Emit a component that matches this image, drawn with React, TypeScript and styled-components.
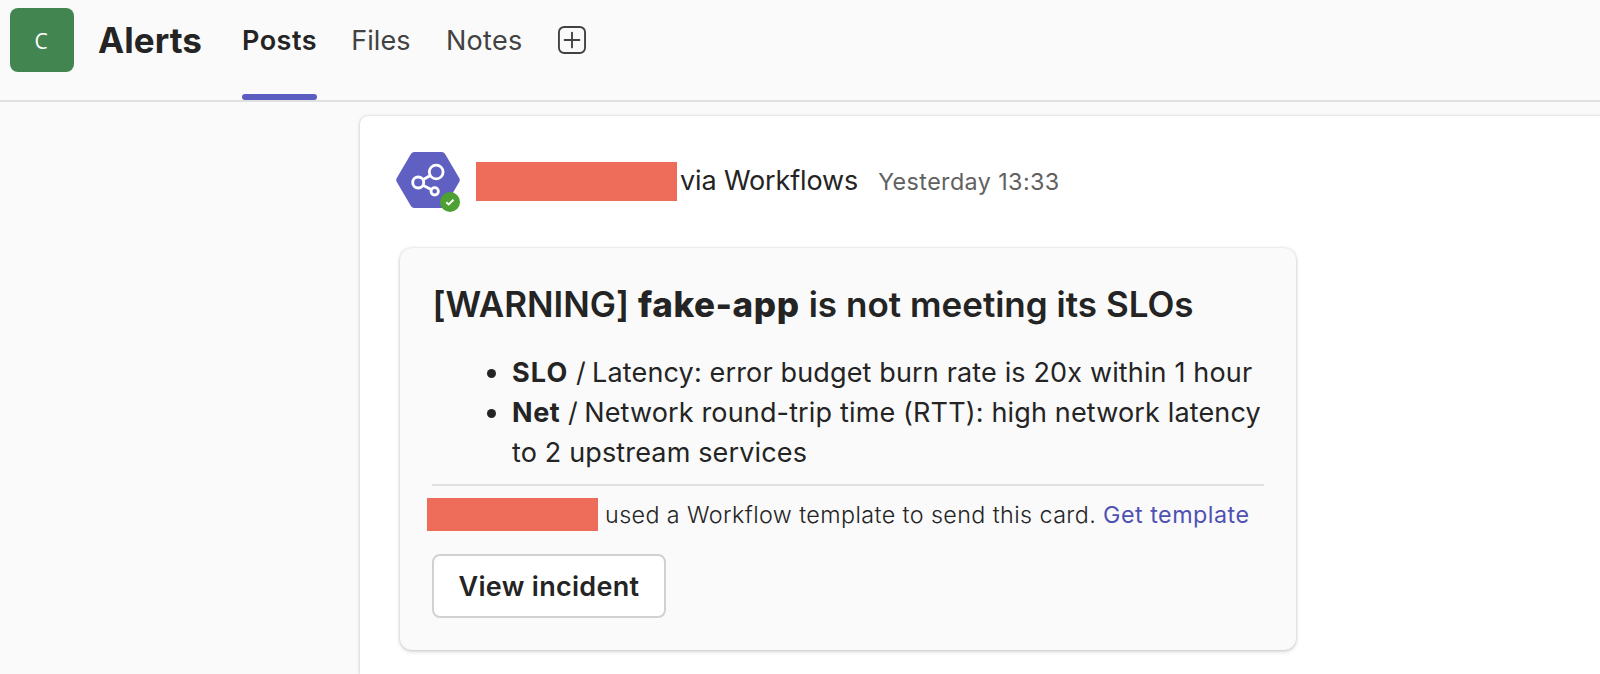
import React from "react";
import styled, { createGlobalStyle } from "styled-components";

const GlobalStyle = createGlobalStyle`
  *, *::before, *::after { box-sizing: border-box; }
  body {
    margin: 0;
    background: #fafafa;
    color: #242424;
    font-family: Inter, "Liberation Sans", sans-serif;
  }
`;

const Page = styled.div`
  display: flex;
  flex-direction: column;
  height: 674px;
  overflow: hidden;
`;

const Header = styled.header`
  display: flex;
  flex: none;
  height: 102px;
  padding-left: 10px;
  border-bottom: 2px solid #e0e0e0;
`;

const TeamAvatar = styled.div`
  display: flex;
  align-items: center;
  justify-content: center;
  width: 64px;
  height: 64px;
  margin: 8px 24px 0 0;
  padding: 2px 2px 0 0;
  border-radius: 8px;
  background: #428550;
  color: #fff;
  font: 400 21px/28px "Open Sans", sans-serif;
`;

const ChannelName = styled.h1`
  width: 144px;
  margin: 0;
  font-size: 35px;
  font-weight: 700;
  line-height: 80px;
  letter-spacing: 0.08px;
`;

const Tabs = styled.nav`
  display: flex;
`;

const Tab = styled.a<{ $active?: boolean; $gap: number; $spacing: number }>`
  position: relative;
  height: 100px;
  margin-right: ${(p) => p.$gap}px;
  color: ${(p) => (p.$active ? "#242424" : "#424242")};
  font-size: 27px;
  font-weight: ${(p) => (p.$active ? 600 : 400)};
  line-height: 82px;
  letter-spacing: ${(p) => p.$spacing}px;

  &::after {
    content: "";
    display: ${(p) => (p.$active ? "block" : "none")};
    position: absolute;
    left: 0;
    bottom: 0;
    width: 75px;
    height: 6px;
    border-radius: 3px;
    background: #5b5dc0;
  }
`;

const AddTab = styled.button`
  display: flex;
  align-items: center;
  height: 80px;
  padding: 0;
  border: 0;
  background: none;
  color: #424242;
`;

const Main = styled.main`
  display: flex;
  flex: 1;
  padding: 14px 0 0 360px;
`;

const Post = styled.article`
  flex: 1;
  padding: 32px 0 0 36px;
  border-top-left-radius: 8px;
  background: #fff;
  box-shadow: 0 0 2px rgba(0, 0, 0, 0.16), 0 1px 4px rgba(0, 0, 0, 0.14);
`;

const PostHeader = styled.div`
  display: flex;
  align-items: center;
  height: 64px;
  margin-bottom: 36px;
`;

const Redacted = styled.span<{ $w: number; $h: number }>`
  flex: none;
  width: ${(p) => p.$w}px;
  height: ${(p) => p.$h}px;
  background: #ee6c5a;
`;

const AuthorRow = styled.div`
  display: flex;
  align-items: center;
  padding-left: 16px;

  ${Redacted} {
    margin-top: 3px;
  }
`;

const Byline = styled.div`
  margin-left: 3px;
  padding-top: 2px;
  font-size: 27px;
  line-height: 40px;
  letter-spacing: -0.13px;
  white-space: pre;
`;

const Timestamp = styled.time`
  margin-left: 20px;
  color: #616161;
  font-size: 23.3px;
  letter-spacing: 0.41px;
`;

const Card = styled.section`
  width: 896px;
  height: 402px;
  margin-left: 4px;
  padding: 32px;
  border-radius: 12px;
  background: #fafafa;
  box-shadow: 0 0 3px rgba(0, 0, 0, 0.16), 0 2px 4px rgba(0, 0, 0, 0.14);
`;

const CardTitle = styled.h2`
  margin: 0 0 25px;
  padding-left: 0.5px;
  font-size: 35px;
  font-weight: 600;
  line-height: 48px;
  letter-spacing: -0.04px;
  word-spacing: 0.3px;
  white-space: nowrap;

  strong {
    font-weight: 800;
    letter-spacing: 0.58px;
  }
`;

const Findings = styled.ul`
  margin: 0 0 11px;
  padding-left: 79px;
  font-size: 27px;
  line-height: 40px;
  letter-spacing: 0.15px;
  white-space: nowrap;

  li {
    padding-left: 1px;
  }
`;

const Source = styled.strong<{ $spacing: number }>`
  font-weight: 700;
  letter-spacing: ${(p) => p.$spacing}px;
`;

const Slash = styled.span`
  margin-right: -1.6px;
`;

const Divider = styled.hr`
  height: 2px;
  margin: 0;
  border: 0;
  background: #e0e0e0;
`;

const Attribution = styled.div`
  display: flex;
  align-items: center;
  height: 33px;
  margin: 12px 0 23px -5px;
  font-size: 23.3px;
  font-weight: 300;
  line-height: 32px;
  white-space: nowrap;
`;

const AttributionText = styled.span`
  margin-left: 7px;
  letter-spacing: 0.41px;
`;

const TemplateLink = styled.a`
  margin-left: 6.9px;
  color: #4f52b2;
  font-weight: 400;
  letter-spacing: 0.5px;
`;

const ActionButton = styled.button`
  width: 234px;
  height: 64px;
  padding: 2px 0 0;
  border: 2px solid #d1d1d1;
  border-radius: 8px;
  background: #fff;
  color: #242424;
  font: 600 27px/40px Inter, "Liberation Sans", sans-serif;
  letter-spacing: 0.3px;
`;

const PlusSquareIcon = () => (
  <svg width="28" height="28" viewBox="0 0 28 28" fill="none" stroke="currentColor" strokeWidth="1.9">
    <rect x="0.95" y="0.95" width="26.1" height="26.1" rx="5.2" />
    <path d="M14 6.6v14.8M6.6 14h14.8" strokeLinecap="round" />
  </svg>
);

const WorkflowsAvatar = () => (
  <svg width="64" height="64" viewBox="0 0 64 64" fill="none">
    <path
      d="M18.3 4h27.4q2.2 0 3.4 2L63.2 30q1.2 2 0 4L49.1 58q-1.2 2-3.4 2H18.3q-2.2 0-3.4-2L.8 34q-1.2-2 0-4L14.9 6q1.2-2 3.4-2z"
      fill="#5f60c2"
    />
    <g stroke="#fff" strokeWidth="2.8">
      <circle cx="40.2" cy="24" r="6.9" />
      <circle cx="22.2" cy="34.5" r="5.5" />
      <circle cx="38.7" cy="43.3" r="3.7" />
      <path d="M27 31.8l7.3-4.3M27 37.2l8.6 4.5" />
    </g>
    <circle cx="54" cy="54" r="10" fill="#4da032" />
    <path d="M50.3 54.2l2.4 2.2 4.8-4.7" stroke="#fff" strokeWidth="2" />
  </svg>
);

export default function App() {
  return (
    <Page>
      <GlobalStyle />
      <Header>
        <TeamAvatar>C</TeamAvatar>
        <ChannelName>Alerts</ChannelName>
        <Tabs>
          <Tab $active $gap={34.2} $spacing={0.48}>Posts</Tab>
          <Tab $gap={35.4} $spacing={0.06}>Files</Tab>
          <Tab $gap={35.4} $spacing={0.3}>Notes</Tab>
        </Tabs>
        <AddTab aria-label="Add a tab">
          <PlusSquareIcon />
        </AddTab>
      </Header>
      <Main>
        <Post>
          <PostHeader>
            <WorkflowsAvatar />
            <AuthorRow>
              <Redacted $w={201} $h={39} />
              <Byline>
                via Workflows<Timestamp>Yesterday 13:33</Timestamp>
              </Byline>
            </AuthorRow>
          </PostHeader>
          <Card>
            <CardTitle>
              [WARNING] <strong>fake-app</strong> is not meeting its SLOs
            </CardTitle>
            <Findings>
              <li>
                <Source $spacing={1.1}>SLO</Source> <Slash>/</Slash> Latency: error budget burn rate is 20x within 1 hour
              </li>
              <li>
                <Source $spacing={0.6}>Net</Source> <Slash>/</Slash> Network round-trip time (RTT): high network latency
                <br />
                to 2 upstream services
              </li>
            </Findings>
            <Divider />
            <Attribution>
              <Redacted $w={171} $h={33} />
              <AttributionText>used a Workflow template to send this card.</AttributionText>
              <TemplateLink>Get template</TemplateLink>
            </Attribution>
            <ActionButton>View incident</ActionButton>
          </Card>
        </Post>
      </Main>
    </Page>
  );
}
